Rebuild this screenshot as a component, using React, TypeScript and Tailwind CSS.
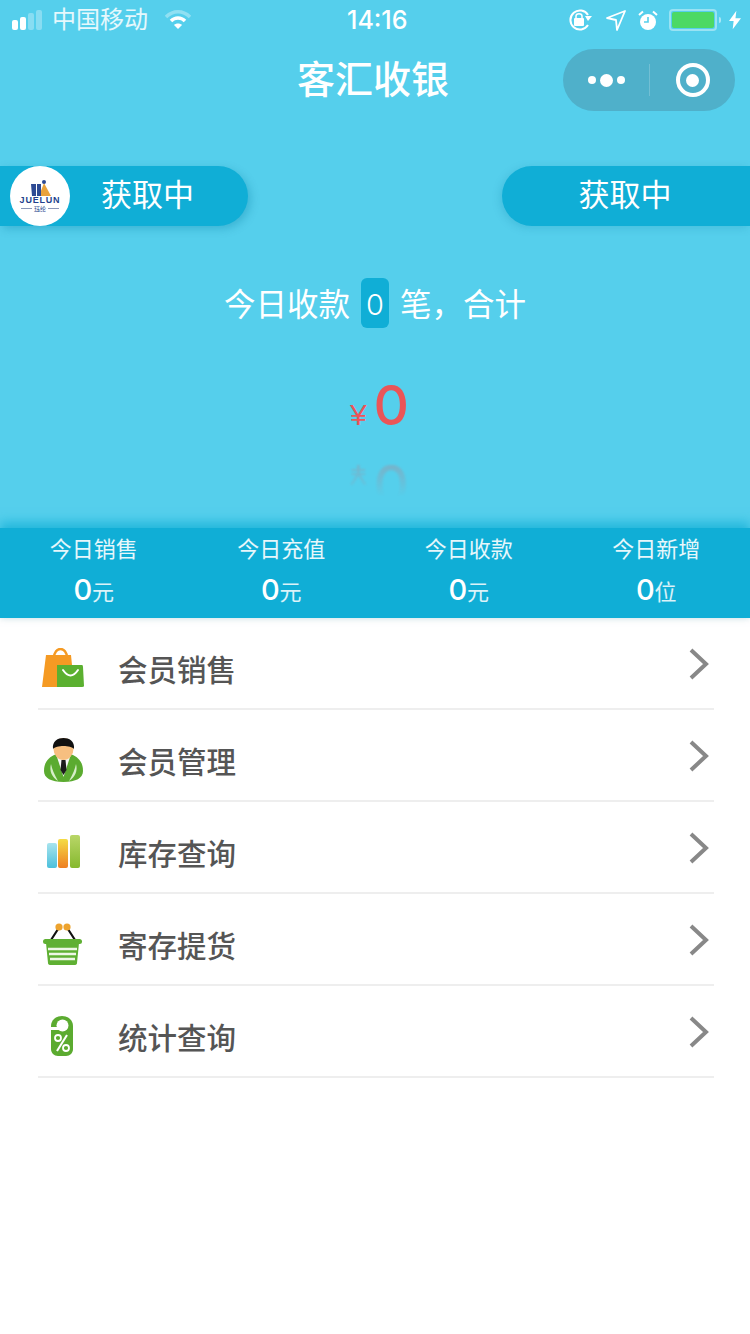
import React from "react";

const FONT = "font-['Liberation_Sans','Noto_Sans_CJK_SC',sans-serif]";
const DIGIT = "font-['Inter','Noto_Sans_CJK_SC',sans-serif]";

const stats = [
    { label: "今日销售", unit: "元" },
    { label: "今日充值", unit: "元" },
    { label: "今日收款", unit: "元" },
    { label: "今日新增", unit: "位" },
];

const BagIcon = () => (
    <svg width="43" height="40" viewBox="0 0 43 40">
        <path d="M12 10 C12 -2 25 -2 25 10" fill="none" stroke="#f59a23" strokeWidth="2.5" />
        <path d="M4 7 H29 L30 17 H15 V39 H0 Z" fill="#f59a23" />
        <path d="M15 17 H40 Q41 17 41 19 L42 38 Q42 39 40 39 H15 Z" fill="#5bb030" />
        <path d="M21 22 Q28.5 33 36 22" fill="none" stroke="#fff" strokeWidth="2" strokeLinecap="round" />
    </svg>
);

const ManIcon = () => (
    <svg width="39" height="45" viewBox="0 0 39 45">
        <path d="M0 33 C0 22 7 18 13 16 H26 C32 18 39 22 39 33 C39 40 32 44 19.5 44 C7 44 0 40 0 33 Z" fill="#5bab30" />
        <path d="M12 16 L19.5 39 L27 16 Z" fill="#f7f7f7" />
        <path d="M7 26 C5 33 8 39 14 43 C10 36 8 31 7 26 Z M32 26 C34 33 31 39 25 43 C29 36 31 31 32 26 Z" fill="#d6eec8" />
        <path d="M17.5 22 H21.5 L22.5 32 L19.5 37 L16.5 32 Z" fill="#1c1c1c" />
        <ellipse cx="19.5" cy="11" rx="10" ry="11" fill="#f7bf80" />
        <path d="M9 11 C8 3 14 0 19.5 0 C25 0 31 3 30 11 C27 7 12 7 9 11 Z" fill="#111" />
    </svg>
);

const BarsIcon = () => (
    <svg width="33" height="34" viewBox="0 0 33 34">
        <defs>
            <linearGradient id="barBlue" x1="0" y1="0" x2="0" y2="1">
                <stop offset="0" stopColor="#a8e4ee" />
                <stop offset="1" stopColor="#4cc0dc" />
            </linearGradient>
            <linearGradient id="barOrange" x1="0" y1="0" x2="0" y2="1">
                <stop offset="0" stopColor="#f5dc45" />
                <stop offset="1" stopColor="#ee7f22" />
            </linearGradient>
            <linearGradient id="barGreen" x1="0" y1="0" x2="0" y2="1">
                <stop offset="0" stopColor="#b9d668" />
                <stop offset="1" stopColor="#86b92f" />
            </linearGradient>
        </defs>
        <rect x="0" y="8" width="10" height="25" rx="2" fill="url(#barBlue)" />
        <rect x="11" y="4" width="10" height="29" rx="2" fill="url(#barOrange)" />
        <rect x="23" y="0" width="10" height="33" rx="2" fill="url(#barGreen)" />
    </svg>
);

const BasketIcon = () => (
    <svg width="40" height="43" viewBox="0 0 40 43">
        <path d="M8 17 L17 3 M32 17 L23 3" stroke="#111" strokeWidth="2.2" fill="none" />
        <circle cx="16" cy="4" r="3.6" fill="#eda32e" />
        <circle cx="24" cy="4" r="3.6" fill="#eda32e" />
        <rect x="0" y="16" width="39" height="5" rx="2.5" fill="#5fb033" />
        <path d="M3 20 H36 L34 40 Q34 42 31 42 H8 Q5 42 5 40 Z" fill="#5fb033" />
        <path d="M5 26 H34 M6 31 H33 M7 36 H32" stroke="#eef7e6" strokeWidth="2.6" />
    </svg>
);

const TagIcon = () => (
    <svg width="22" height="40" viewBox="0 0 22 40">
        <path d="M11 0 C17 0 22 4 22 10 V33 C22 37 19 40 15 40 H7 C3 40 0 37 0 33 V10 C0 4 5 0 11 0 Z" fill="#5bab30" />
        <circle cx="11.5" cy="9.5" r="6" fill="#fff" />
        <path d="M0 11 H8 V14 H0 Z" fill="#fff" />
        <circle cx="7" cy="22" r="3" fill="none" stroke="#fff" strokeWidth="1.8" />
        <circle cx="15" cy="32" r="3" fill="none" stroke="#fff" strokeWidth="1.8" />
        <path d="M16 19 L6 35" stroke="#fff" strokeWidth="2" />
    </svg>
);

const menu = [
    { label: "会员销售", icon: <BagIcon />, left: "ml-[4px]" },
    { label: "会员管理", icon: <ManIcon />, left: "ml-[6px]" },
    { label: "库存查询", icon: <BarsIcon />, left: "ml-[9px]" },
    { label: "寄存提货", icon: <BasketIcon />, left: "ml-[5px]" },
    { label: "统计查询", icon: <TagIcon />, left: "ml-[13px]" },
];

const Logo = () => (
    <div className="w-[60px] h-[60px] rounded-full bg-white flex flex-col items-center justify-center ml-[10px] shrink-0">
        <svg width="22" height="16" viewBox="0 0 22 16">
            <path d="M10 16 L15 3 L22 16 Z" fill="#e9a23b" />
            <path d="M2 4 H7 V16 H3 Z M8 4 H12 V16 H8 Z" fill="#2d4a94" />
            <circle cx="15" cy="2" r="2" fill="#2d4a94" />
        </svg>
        <span className="text-[9px] leading-[9px] font-bold text-[#233f8c] tracking-[0.8px]">JUELUN</span>
        <div className="flex items-center gap-[2px] text-[6px] leading-[8px] text-[#233f8c]">
            <span className="w-[11px] h-px bg-[#8a97b8]"></span>
            <span>珏纶</span>
            <span className="w-[11px] h-px bg-[#8a97b8]"></span>
        </div>
    </div>
);

const StatusBar = () => (
    <div className="h-[40px] shrink-0 relative flex items-center justify-between text-white pl-[12px] pr-[9px]">
        <div className="flex items-center">
            <div className="flex items-end gap-[2px] h-[20px]">
                <span className="w-[6px] h-[10px] rounded-[2px] bg-white"></span>
                <span className="w-[6px] h-[13px] rounded-[2px] bg-white"></span>
                <span className="w-[6px] h-[17px] rounded-[2px] bg-white/30"></span>
                <span className="w-[6px] h-[20px] rounded-[2px] bg-white/30"></span>
            </div>
            <span className="ml-[10px] text-[24px] leading-[30px] text-white/85">中国移动</span>
            <svg className="ml-[17px]" width="26" height="20" viewBox="0 0 26 20">
                <path d="M1 7 C8 0 18 0 25 7" fill="none" stroke="#fff" strokeOpacity="0.35" strokeWidth="3.5" />
                <path d="M6 11 C10 7 16 7 20 11" fill="none" stroke="#fff" strokeWidth="3.5" />
                <path d="M9 15 C11 13 15 13 17 15 L13 19 Z" fill="#fff" />
            </svg>
        </div>
        <span className={`absolute left-[347px] top-[6px] text-[25px] leading-[29px] font-medium ${DIGIT}`}>14:16</span>
        <div className="flex items-center">
            <svg width="26" height="24" viewBox="0 0 26 24">
                <path d="M21 17 A9.5 9.5 0 1 1 21 7" fill="none" stroke="#fff" strokeWidth="2" />
                <path d="M18 8 L25 8 L21 13 Z" fill="#fff" />
                <rect x="7" y="10" width="10" height="8" rx="1" fill="#fff" />
                <path d="M9 10 V8 C9 5 15 5 15 8 V10" fill="none" stroke="#fff" strokeWidth="1.5" />
            </svg>
            <svg className="ml-[13px]" width="20" height="21" viewBox="0 0 20 21">
                <path d="M1 8 L19 1 L11 20 L10 10 Z" fill="none" stroke="#fff" strokeWidth="1.8" strokeLinejoin="round" />
            </svg>
            <svg className="ml-[12px]" width="20" height="21" viewBox="0 0 20 21">
                <circle cx="10" cy="12" r="8" fill="#fff" />
                <path d="M10 7 V12 H6" fill="none" stroke="#55cfec" strokeWidth="1.6" />
                <path d="M1 5 L5 1.5 M19 5 L15 1.5" stroke="#fff" strokeWidth="2" />
            </svg>
            <div className="ml-[11px] w-[48px] h-[22px] rounded-[4px] border-2 border-white/40 p-[1px]">
                <div className="w-full h-full rounded-[2px] bg-[#4cd964]"></div>
            </div>
            <span className="ml-[2px] w-[2px] h-[6px] rounded-r bg-white/50"></span>
            <svg className="ml-[8px]" width="12" height="20" viewBox="0 0 13 20">
                <path d="M8 0 L0 11 H5 L4 20 L13 8 H7 Z" fill="#fff" />
            </svg>
        </div>
    </div>
);

const NavBar = () => (
    <div className="relative h-[80px] shrink-0 flex items-center justify-center">
        <span className="text-[38px] leading-[50px] text-white font-medium mr-[4px]">客汇收银</span>
        <div className="absolute right-[15px] top-[9px] w-[172px] h-[62px] rounded-full bg-[#4fb0ca] flex items-center">
            <div className="w-[86px] flex items-center justify-center gap-[4px]">
                <span className="w-[8px] h-[8px] rounded-full bg-white"></span>
                <span className="w-[13px] h-[13px] rounded-full bg-white"></span>
                <span className="w-[8px] h-[8px] rounded-full bg-white"></span>
            </div>
            <span className="w-px h-[32px] bg-white/20"></span>
            <div className="flex-1 flex items-center justify-center">
                <div className="w-[34px] h-[34px] rounded-full border-[4px] border-white flex items-center justify-center">
                    <span className="w-[13px] h-[13px] rounded-full bg-white"></span>
                </div>
            </div>
        </div>
    </div>
);

const Amount = () => (
    <div className="h-[60px] flex items-baseline justify-center text-[#ea5558] ml-[9px]">
        <span className="text-[30px] leading-[60px] mr-[7px]">¥</span>
        <span className={`text-[55px] leading-[60px] font-medium ${DIGIT}`}>0</span>
    </div>
);

const App: React.FC = () => {
    return (
        <div className={`w-[750px] h-[1334px] bg-white overflow-hidden ${FONT}`}>
            <div className="h-[528px] bg-[#55cfec] flex flex-col overflow-hidden">
                <StatusBar />
                <NavBar />
                <div className="shrink-0 flex items-center justify-between mt-[46px]">
                    <div className="w-[248px] h-[60px] rounded-r-full bg-[#10aed6] flex items-center shadow-[3px_3px_8px_rgba(0,120,160,0.3)]">
                        <Logo />
                        <span className="ml-[31px] mt-[1px] text-[31px] text-white">获取中</span>
                    </div>
                    <div className="w-[248px] h-[60px] rounded-l-full bg-[#10aed6] flex items-center justify-center pr-[2px] shadow-[-2px_2px_8px_rgba(0,120,160,0.2)]">
                        <span className="text-[31px] text-white">获取中</span>
                    </div>
                </div>
                <div className="mt-[52px] h-[50px] shrink-0 flex justify-center text-[31.5px] leading-[50px] text-white">
                    <span className="pt-[2px]">今日收款</span>
                    <span className={`mx-[11px] pt-[2px] w-[28px] h-[50px] rounded-[6px] bg-[#10aed6] text-center text-[29px] font-light ${DIGIT}`}>0</span>
                    <span className="pt-[2px]">笔，合计</span>
                </div>
                <div className="mt-[47px] shrink-0">
                    <Amount />
                </div>
                <div className="shrink-0 -scale-y-100 opacity-30 blur-[1px] mt-[20px] [mask-image:linear-gradient(to_top,black,transparent_70%)]">
                    <Amount />
                </div>
            </div>
            <div className="h-[90px] bg-[#10aed6] grid grid-cols-4 shadow-[0_-6px_10px_rgba(16,174,214,0.7),0_2px_6px_rgba(0,0,0,0.06)] relative text-white">
                {stats.map((s) => (
                    <div key={s.label} className="flex flex-col items-center pt-[7px]">
                        <span className="text-[22px] leading-[30px] text-white/90">{s.label}</span>
                        <div className="flex items-baseline mt-[7px]">
                            <span className={`text-[29px] leading-[36px] font-medium ${DIGIT}`}>0</span>
                            <span className="text-[22px] leading-[36px] text-white/85">{s.unit}</span>
                        </div>
                    </div>
                ))}
            </div>
            <div className="ml-[38px] w-[676px]">
                {menu.map((m) => (
                    <div key={m.label} className="h-[92px] flex items-center border-b-2 border-[#eeeeee] pt-[10px]">
                        <div className="w-[80px] shrink-0 flex items-center">
                            <div className={m.left}>{m.icon}</div>
                        </div>
                        <span className="flex-1 text-[29.5px] font-medium text-[#555555] mt-[6px]">{m.label}</span>
                        <svg className="mr-[5px] mb-[8px]" width="20" height="32" viewBox="0 0 20 32">
                            <path d="M2 2 L17 16 L2 30" fill="none" stroke="#888888" strokeWidth="4" />
                        </svg>
                    </div>
                ))}
            </div>
        </div>
    );
};

export default App;
